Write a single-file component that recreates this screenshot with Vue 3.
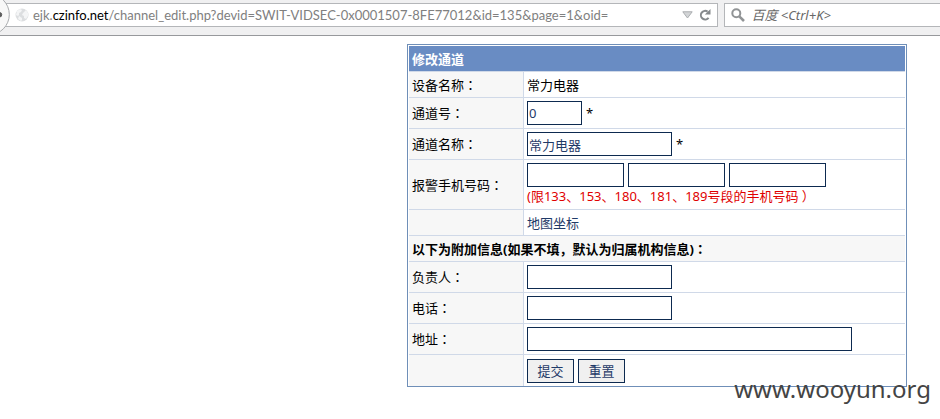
<script setup>
import { ref } from 'vue'

const address = 'ejk.czinfo.net/channel_edit.php?devid=SWIT-VIDSEC-0x0001507-8FE77012&id=135&page=1&oid='
const [host, domain] = ['ejk.', 'czinfo.net']
const path = address.slice(host.length + domain.length)

const channelNo = ref('0')
const channelName = ref('常力电器')
const phones = ref(['', '', ''])
const manager = ref('')
const tel = ref('')
const street = ref('')
</script>

<template>
  <div class="page">
    <header class="toolbar">
      <button class="back" type="button" aria-label="Back">
        <svg width="10" height="32" viewBox="0 0 10 32">
          <circle cx="-11" cy="14.500" r="20.300" fill="#f8f8f8" stroke="#a9abae" />
          <path d="M-1 12.500H-0.500a2.200 2.200 0 0 1 0 4.500H-1z" fill="#5c5c5c" stroke="#5c5c5c" />
        </svg>
      </button>
      <div class="address">
        <svg class="globe" width="14" height="14" viewBox="0 0 14 14">
          <circle cx="7" cy="7" r="6.500" fill="#dcdee0" />
          <path d="M2 3l3-2 2 1-1 2-2 1v2l-1 1-2-1zM8 5l3-3 2 3v3l-2 3-2-1V8L7 7zM4 8l3 2v2l-1 1-3-2z" fill="#f4f5f6" />
        </svg>
        <a class="url" href="#">{{ host }}<span class="domain">{{ domain }}</span>{{ path }}</a>
        <svg class="drop" width="11" height="8" viewBox="0 0 11 8">
          <path d="M0.800 0.800H10.200L5.500 7z" fill="#d3d5d7" stroke="#aaadb0" />
        </svg>
        <button class="reload" type="button" aria-label="Reload">
          <svg width="12" height="12" viewBox="0 0 12 12">
            <path d="M9.600 8.800A4.300 4.300 0 1 1 8.600 2.600" fill="none" stroke="#85898c" stroke-width="2" />
            <path d="M11.500 0v5.600H5.900z" fill="#85898c" />
          </svg>
        </button>
      </div>
      <label class="search">
        <svg width="14" height="14" viewBox="0 0 14 14">
          <circle cx="5.300" cy="5.300" r="4" fill="none" stroke="#919496" stroke-width="2" />
          <path d="M8.300 8.300L13 13" stroke="#919496" stroke-width="2.600" />
        </svg>
        <input type="text" placeholder="百度 <Ctrl+K>" aria-label="百度" />
      </label>
    </header>

    <main>
      <form class="panel" @submit.prevent>
        <table>
          <colgroup><col class="label-col" /><col /></colgroup>
          <thead>
            <tr><th colspan="2">修改通道</th></tr>
          </thead>
          <tbody>
            <tr class="short"><td>设备名称<i>：</i></td><td>常力电器</td></tr>
            <tr>
              <td><label for="no">通道号<i>：</i></label></td>
              <td><div class="fields"><input id="no" v-model="channelNo" class="tiny" type="text" /><span>*</span></div></td>
            </tr>
            <tr>
              <td><label for="name">通道名称<i>：</i></label></td>
              <td><div class="fields"><input id="name" v-model="channelName" class="medium" type="text" /><span>*</span></div></td>
            </tr>
            <tr class="tall">
              <td><label for="phone0">报警手机号码<i>：</i></label></td>
              <td>
                <div class="fields">
                  <input v-for="(p, n) in phones" :id="'phone' + n" :key="n" v-model="phones[n]" class="small" type="text" />
                </div>
                <p class="hint">(限133、153、180、181、189号段的手机号码 ）</p>
              </td>
            </tr>
            <tr class="short"><td></td><td><a href="#">地图坐标</a></td></tr>
            <tr class="short section"><th colspan="2">以下为附加信息(如果不填，默认为归属机构信息)<i>：</i></th></tr>
            <tr>
              <td><label for="manager">负责人<i>：</i></label></td>
              <td><div class="fields"><input id="manager" v-model="manager" class="medium" type="text" /></div></td>
            </tr>
            <tr>
              <td><label for="tel">电话<i>：</i></label></td>
              <td><div class="fields"><input id="tel" v-model="tel" class="medium" type="text" /></div></td>
            </tr>
            <tr>
              <td><label for="street">地址<i>：</i></label></td>
              <td><div class="fields"><input id="street" v-model="street" class="wide" type="text" /></div></td>
            </tr>
            <tr>
              <td></td>
              <td><div class="fields"><button type="submit">提交</button><button type="reset">重置</button></div></td>
            </tr>
          </tbody>
        </table>
      </form>
    </main>
    <div class="watermark">www.wooyun.org</div>
  </div>
</template>

<style>
body {
  margin: 0;
  background: #fff;
}
</style>

<style scoped>
.page {
  position: relative;
  min-height: 100vh;
  overflow: hidden;
  box-sizing: border-box;
  font: 13px/18px "Noto Sans", "Noto Sans CJK SC", sans-serif;
  color: #000;
}
.toolbar {
  display: flex;
  align-items: flex-start;
  height: 35px;
  background: #f0f0f1;
  border-bottom: 1px solid #97999c;
}
.back {
  flex: none;
  width: 10px;
  height: 32px;
  padding: 0;
  border: 0;
  background: none;
  z-index: 1;
}
.back svg {
  display: block;
}
.address,
.search {
  display: flex;
  align-items: center;
  box-sizing: border-box;
  height: 24px;
  margin-top: 3px;
  border: 1px solid #b4b6b9;
  background: #fff;
}
.address {
  flex: 1;
  min-width: 0;
  margin-left: -10px;
  padding: 0 6px 0 14px;
}
.globe {
  flex: none;
}
.url {
  flex: 1;
  min-width: 0;
  margin-left: 4px;
  overflow: hidden;
  white-space: nowrap;
  font: 13px/18px Lato, sans-serif;
  color: #808080;
  text-decoration: none;
}
.domain {
  color: #000;
}
.reload {
  margin-left: 6px;
  padding: 0;
  border: 0;
  background: none;
}
.reload svg {
  display: block;
}
.search {
  flex: none;
  width: 24%;
  margin-left: 6px;
  margin-right: -10px;
  padding-left: 6px;
}
.search svg {
  flex: none;
}
.search input {
  min-width: 0;
  margin-left: 6px;
  padding: 0;
  border: 0;
  outline: 0;
  font: italic 13px/18px "Noto Sans", "Noto Sans CJK SC", sans-serif;
}
.search input::placeholder {
  color: #686868;
}
main {
  padding: 8px 33px 32px 407px;
}
.panel {
  border: 1px solid #6f8fb8;
  padding: 1px 1px 0;
}
table {
  width: 100%;
  table-layout: fixed;
  border-spacing: 0;
}
.label-col {
  width: 115px;
}
th,
td {
  box-sizing: border-box;
  height: 31px;
  padding: 0 3px;
  text-align: left;
  vertical-align: middle;
  border-bottom: 1px solid #d0d9e8;
}
td:first-child {
  background: #f7f7f7;
  border-right: 1px solid #d0d9e8;
}
tr:last-child td {
  border-bottom: 0;
}
.short td,
.short th,
thead th {
  height: 26px;
}
thead th {
  background: #698cc3;
  background-clip: padding-box;
  color: #fff;
}
.section th {
  background: #f7f7f7;
}
.tall td {
  height: 50px;
}
i {
  font-family: "Noto Sans CJK TC", sans-serif;
  font-style: normal;
}
.fields {
  display: flex;
  align-items: center;
  gap: 4px;
}
.fields input,
.fields button {
  box-sizing: border-box;
  height: 24px;
  border: 1px solid #0d2a50;
  padding: 0 1px;
  background: #fff;
  color: #1f3a68;
  font: inherit;
}
.fields button {
  width: 47px;
  background: #f0f0f0;
}
.tiny {
  width: 55px;
}
.small {
  width: 97px;
}
.medium {
  width: 145px;
}
.wide {
  width: 325px;
}
.hint {
  margin: 0 0 1px;
  color: #e00000;
  white-space: nowrap;
}
td a {
  color: #1f3a68;
  text-decoration: none;
}
.watermark {
  position: absolute;
  right: 9px;
  bottom: 12px;
  font: 24px/36px "Noto Sans", sans-serif;
  color: #444;
}
</style>
